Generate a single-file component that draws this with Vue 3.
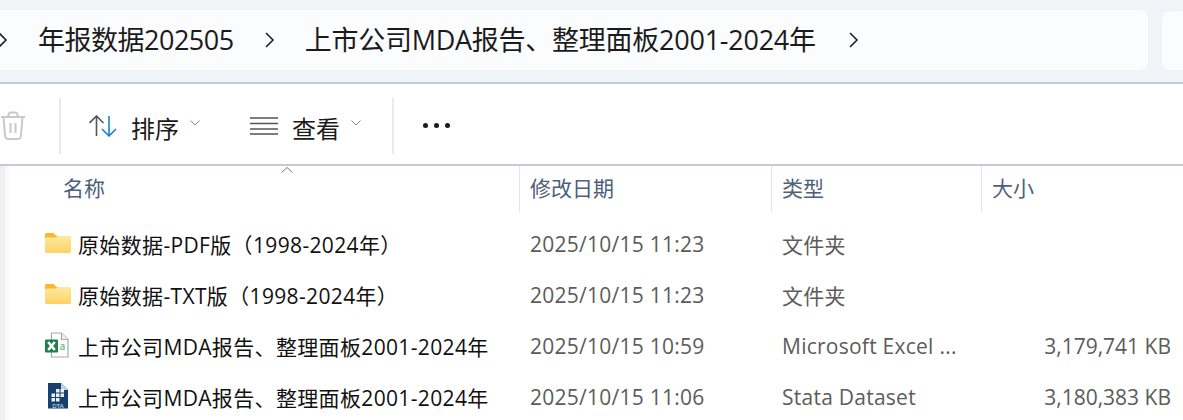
<template>
  <div class="window">
    <div class="topbar">
      <div class="crumbs">
        <svg class="chev first" width="10" height="16" viewBox="0 0 10 16"><path d="M1 1 8 8 1 15" /></svg>
        <span class="crumb c1">年报数据202505</span>
        <svg class="chev" width="10" height="16" viewBox="0 0 10 16"><path d="M1 1 8 8 1 15" /></svg>
        <span class="crumb c2">上市公司MDA报告、整理面板2001-2024年</span>
        <svg class="chev" width="10" height="16" viewBox="0 0 10 16"><path d="M1 1 8 8 1 15" /></svg>
      </div>
      <div class="search"></div>
    </div>

    <div class="toolbar">
      <svg class="trash" width="26" height="30" viewBox="0 0 26 30">
        <path d="M1 6h24M8.500 6V4a2.500 2.500 0 0 1 2.500-2.500h4A2.500 2.500 0 0 1 17.500 4v2M3.500 6l1.600 19a3 3 0 0 0 3 3h9.800a3 3 0 0 0 3-3L22.500 6M10.500 12v10M15.500 12v10" />
      </svg>
      <div class="sep"></div>
      <div class="tool sort">
        <svg width="28" height="22" viewBox="0 0 28 22">
          <path class="up" d="M7.500 21V1M.5 8 7.500 1l7 7" />
          <path class="down" d="M20 1v20M13 14l7 7 7-7" />
        </svg>
        <span>排序</span>
        <svg class="caret" width="10" height="6" viewBox="0 0 10 6"><path d="M.5.500 5 5 9.500.500" /></svg>
      </div>
      <div class="tool view">
        <svg width="28" height="18" viewBox="0 0 28 18">
          <path d="M0 1h28M0 6.500h28M0 12h28M0 17h28" />
        </svg>
        <span>查看</span>
        <svg class="caret" width="10" height="6" viewBox="0 0 10 6"><path d="M.5.500 5 5 9.500.500" /></svg>
      </div>
      <div class="sep last"></div>
      <div class="more"><i></i><i></i><i></i></div>
    </div>

    <div class="files">
      <div class="gutter"></div>
      <div class="list">
        <svg class="sort-mark" width="12" height="6" viewBox="0 0 12 6"><path d="M.5 5.500 6 .5l5.500 5" /></svg>
        <div class="row head">
          <div class="name">名称</div>
          <div class="date">修改日期</div>
          <div class="type">类型</div>
          <div class="size">大小</div>
        </div>
        <div v-for="file in files" :key="file.name + file.kind" class="row item">
          <div class="name">
            <svg v-if="file.kind === 'folder'" class="icon" width="26" height="26" viewBox="0 0 26 26">
              <defs>
                <linearGradient id="folderFill" x1="0" y1="0" x2="0" y2="1">
                  <stop offset="0" stop-color="#ffe9a0" />
                  <stop offset="1" stop-color="#fdd264" />
                </linearGradient>
              </defs>
              <path d="M0 4.500A1.500 1.500 0 0 1 1.500 3h7l3 3H25v4H0z" fill="#fcb924" />
              <path d="M0 9a1.500 1.500 0 0 1 1.500-1.500H11l2-1.500h11.500A1.500 1.500 0 0 1 26 7.500v14a1.500 1.500 0 0 1-1.500 1.500h-23A1.500 1.500 0 0 1 0 21.500z" fill="url(#folderFill)" />
            </svg>
            <svg v-else-if="file.kind === 'excel'" class="icon" width="26" height="26" viewBox="0 0 26 26">
              <path d="M6.500 1h10l6.500 6.500V25H6.500z" fill="#fff" stroke="#a9a9a9" stroke-width="1.200" />
              <path d="M16.500 1v6.500H23" fill="#f1f1f1" stroke="#a9a9a9" stroke-width="1.200" />
              <rect x="0" y="7.500" width="13" height="13" rx="1" fill="#1d7f4d" />
              <path d="M3.200 10 9.800 18M9.800 10 3.200 18" stroke="#fff" stroke-width="2.600" fill="none" />
              <text x="14.500" y="18" class="sheet-a">a</text>
            </svg>
            <svg v-else class="icon" width="26" height="26" viewBox="0 0 26 26">
              <path d="M3 0h13l7 7v18.500H3z" fill="#15416f" />
              <path d="M16 0v7h7z" fill="#c5d3e1" />
              <path d="M11 6h3.500v3.500H11zM15.500 6H19v3.500h-3.500zM6.500 10.500H10V14H6.500zM11 10.500h3.500V14H11zM15.500 10.500H19V14h-3.500zM6.500 15H10v3.500H6.500zM11 15h3.500v3.500H11z" fill="#e9eff5" />
              <text x="13" y="24.500" class="dta">DTA</text>
            </svg>
            <span>{{ file.name }}</span>
          </div>
          <div class="date">{{ file.date }}</div>
          <div class="type">{{ file.type }}</div>
          <div class="size">{{ file.size }}</div>
        </div>
      </div>
    </div>
  </div>
</template>

<script setup>
const files = [
  { kind: 'folder', name: '原始数据-PDF版（1998-2024年）', date: '2025/10/15 11:23', type: '文件夹', size: '' },
  { kind: 'folder', name: '原始数据-TXT版（1998-2024年）', date: '2025/10/15 11:23', type: '文件夹', size: '' },
  { kind: 'excel', name: '上市公司MDA报告、整理面板2001-2024年', date: '2025/10/15 10:59', type: 'Microsoft Excel ...', size: '3,179,741 KB' },
  { kind: 'stata', name: '上市公司MDA报告、整理面板2001-2024年', date: '2025/10/15 11:06', type: 'Stata Dataset', size: '3,180,383 KB' },
]
</script>

<style scoped>
.window {
  width: 1183px;
  height: 420px;
  overflow: hidden;
  background: #fff;
  font-family: "Open Sans", "Noto Sans CJK SC", sans-serif;
  color: #1b1b1b;
}

.topbar {
  display: flex;
  height: 84px;
  box-sizing: border-box;
  padding-top: 10px;
  background: #f0f4f9;
  border-bottom: 2px solid #c0ccda;
}

.crumbs {
  display: flex;
  align-items: center;
  width: 1148px;
  height: 60px;
  box-sizing: border-box;
  background: #fbfcfe;
  border-radius: 0 8px 8px 0;
}

.chev { flex: none; fill: none; stroke: #222; stroke-width: 1.600; }
.chev.first { margin-left: -2px; }

.crumb { font-size: 27px; line-height: 60px; white-space: nowrap; letter-spacing: -0.25px; }
.c1 { margin-left: 30px; letter-spacing: -0.5px; }
.c2 { margin: 0 33px 0 30px; }
.c1 + .chev { margin-left: 31px; }

.search {
  width: 21px;
  height: 59px;
  margin: 1px 0 0 14px;
  background: #fbfcfe;
  border-radius: 8px 0 0 8px;
}

.toolbar {
  display: flex;
  align-items: center;
  height: 82px;
  box-sizing: border-box;
  padding-top: 4px;
  border-bottom: 2px solid #c0ccda;
  font-size: 24px;
}

.trash { flex: none; fill: none; stroke: #c9c9c9; stroke-width: 2; }

.sep { width: 2px; height: 56px; margin-left: 33px; background: #eaeaea; }
.sep.last { margin-left: 31px; }

.tool { display: flex; align-items: center; white-space: nowrap; }
.tool span { position: relative; top: 1px; }
.tool svg { fill: none; }
.tool .caret { stroke: #8b8b8b; stroke-width: 1; margin-top: -6px; }

.sort { margin-left: 28px; }
.sort span { margin-left: 14px; }
.sort .caret { margin-left: 11px; }
.sort .up { stroke: #555; stroke-width: 1.600; }
.sort .down { stroke: #1a7fd8; stroke-width: 1.600; }

.view { margin-left: 50px; }
.view > svg:first-child { stroke: #555; stroke-width: 1.400; }
.view span { margin-left: 14px; }
.view .caret { margin-left: 11px; }

.more { display: flex; gap: 6px; margin-left: 29px; margin-top: -2px; }
.more i { width: 5px; height: 5px; border-radius: 50%; background: #1b1b1b; }

.files { display: flex; height: 254px; }

.gutter {
  width: 5px;
  background: #f0f0f0;
  border-right: 4px solid #f9f9f9;
}

.list { position: relative; flex: 1; min-width: 0; }

.sort-mark {
  position: absolute;
  left: 272px;
  top: 1px;
  fill: none;
  stroke: #777;
  stroke-width: 1;
}

.row { display: flex; align-items: center; white-space: nowrap; }
.row > div { box-sizing: border-box; }

.name { width: 510px; }
.date { width: 252px; }
.type { width: 210px; }
.size { flex: 1; }

.head { height: 46px; margin-bottom: 6px; align-items: flex-start; line-height: 44px; font-size: 21px; color: #4c607a; }
.head .name { padding-left: 54px; }
.head .date, .head .type, .head .size {
  height: 46px;
  padding-left: 10px;
  border-left: 1px solid #e5e5e5;
}

.item { height: 51px; font-size: 21px; }
.item .name { display: flex; align-items: center; padding-left: 36px; color: #111; }
.item .name .icon { flex: none; margin-top: -2px; }
.item .name span { margin-left: 7px; letter-spacing: 0.35px; }
.item .date, .item .type { padding-left: 11px; color: #5c5c5c; letter-spacing: 0.25px; }
.item .size { padding-right: 12px; text-align: right; color: #5c5c5c; }

.sheet-a { font-size: 10px; font-weight: 600; fill: #66bb8c; }
.dta { font-size: 6px; fill: #dfe7ef; text-anchor: middle; font-family: "Liberation Sans", sans-serif; }
</style>

<style>
html, body { margin: 0; background: #fff; }
</style>
